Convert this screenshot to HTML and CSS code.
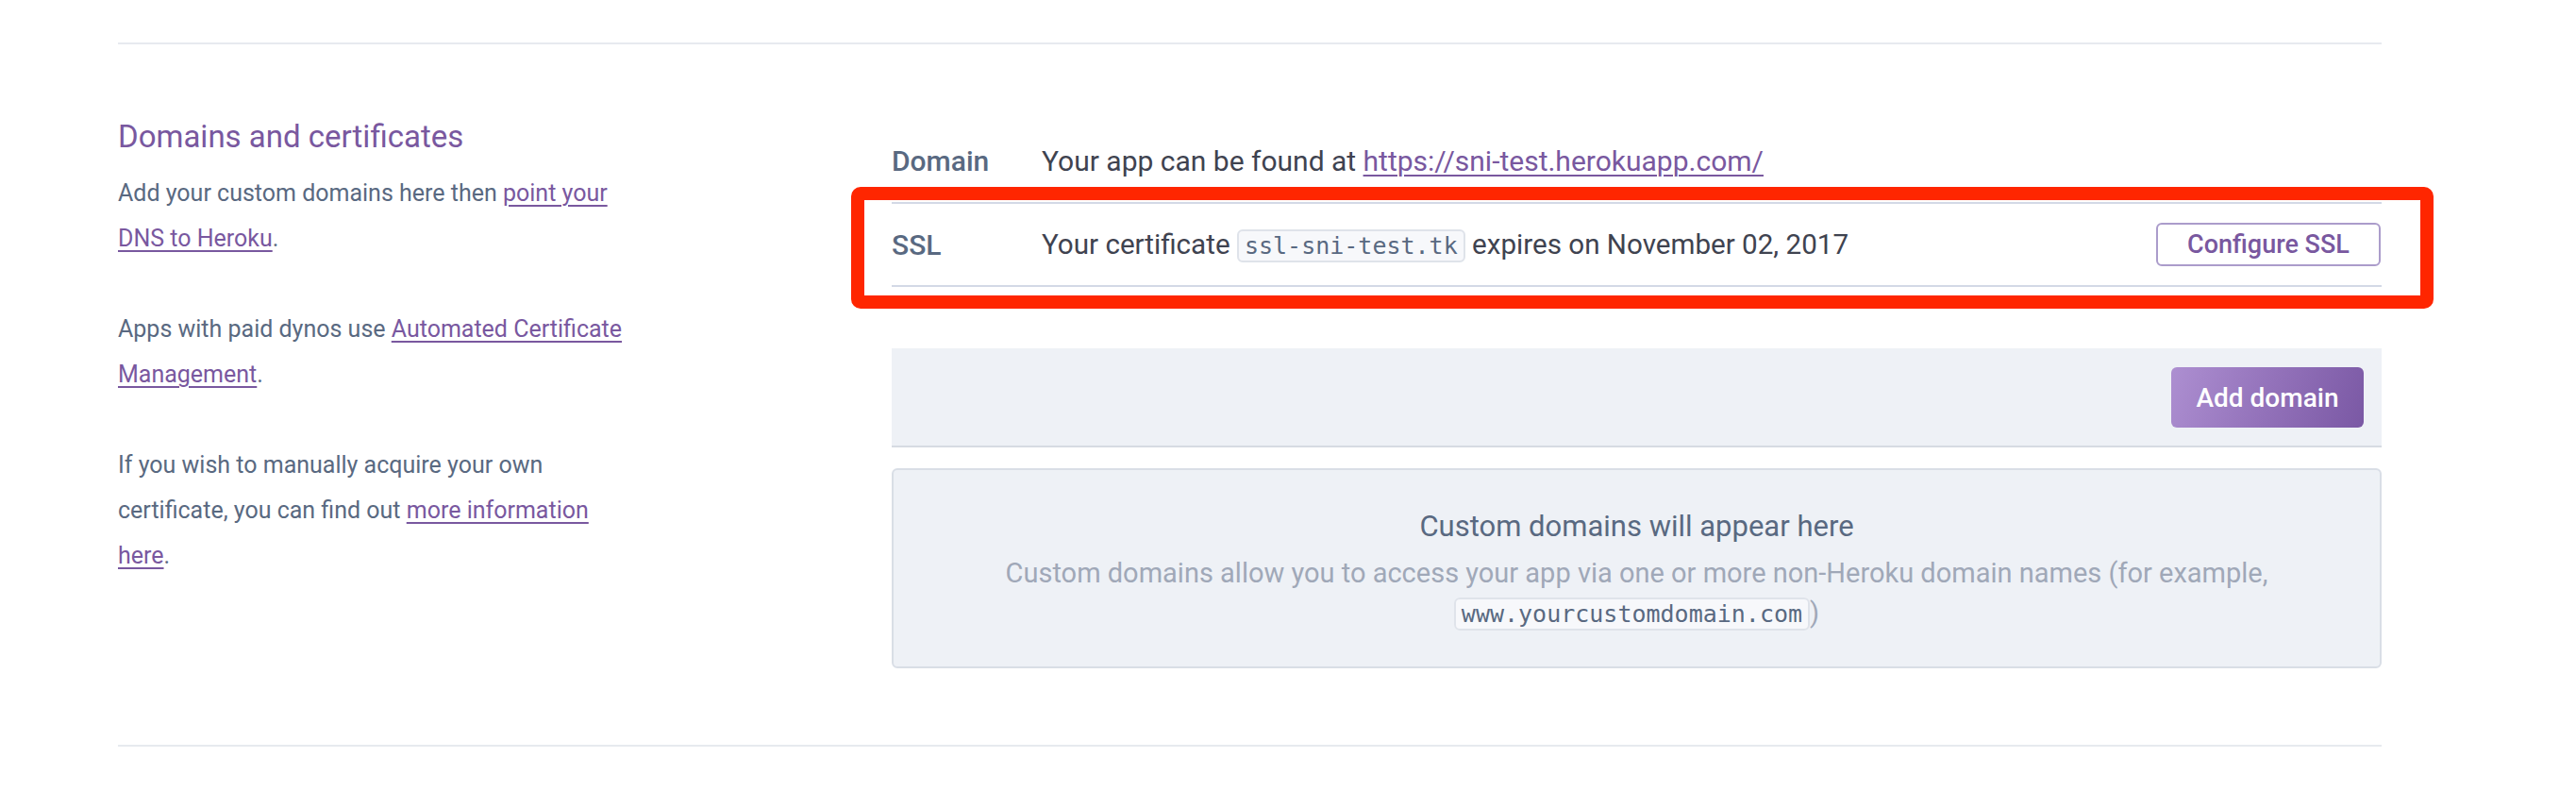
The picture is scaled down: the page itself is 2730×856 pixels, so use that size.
FILE: index.html
```html
<!DOCTYPE html>
<html lang="en">
<head>
<meta charset="utf-8">
<title>Domains and certificates</title>
<link rel="stylesheet" href="styles.css">
</head>
<body>
<section class="settings-section">
  <div class="intro">
    <h2 class="intro-title">Domains and certificates</h2>
    <p>Add your custom domains here then <a href="#">point your DNS to Heroku</a>.</p>
    <p>Apps with paid dynos use <a href="#">Automated Certificate Management</a>.</p>
    <p>If you wish to manually acquire your own certificate, you can find out <a href="#">more information here</a>.</p>
  </div>
  <div class="content">
    <div class="info-row">
      <div class="info-label">Domain</div>
      <div class="info-value">Your app can be found at <a href="#">https://sni-test.herokuapp.com/</a></div>
    </div>
    <div class="info-row ssl-row">
      <div class="info-label">SSL</div>
      <div class="info-value">Your certificate <code>ssl-sni-test.tk</code> expires on November 02, 2017</div>
      <button class="btn-outline" type="button">Configure SSL</button>
      <div class="highlight"></div>
    </div>
    <div class="toolbar">
      <button class="btn-primary" type="button">Add domain</button>
    </div>
    <div class="empty-state">
      <div class="empty-title">Custom domains will appear here</div>
      <div class="empty-text">Custom domains allow you to access your app via one or more non-Heroku domain names (for example, <code>www.yourcustomdomain.com</code>)</div>
    </div>
  </div>
</section>
</body>
</html>
```

FILE: styles.css
```css
html, body {
  margin: 0;
  padding: 0;
  background: #ffffff;
}

body {
  font-family: Roboto, "Liberation Sans", Arial, sans-serif;
  color: #596981;
}

.settings-section {
  box-sizing: border-box;
  margin: 45px 0 0 125px;
  width: 2399px;
  border-top: 2px solid #e7eaef;
  border-bottom: 2px solid #e7eaef;
  padding: 78px 0 81px;
  display: flex;
}

.intro {
  width: 820px;
  flex: none;
}

.intro-title {
  margin: 0 0 16px;
  font-size: 33px;
  line-height: 40px;
  font-weight: 400;
  color: #79589f;
}

.intro p {
  width: 552px;
  margin: 0 0 48px;
  font-size: 25px;
  line-height: 48px;
  color: #596981;
}

a {
  color: #79589f;
  text-decoration: underline;
  text-decoration-thickness: 2px;
  text-underline-offset: 4px;
}

.content {
  flex: 1;
  padding-top: 2px;
}

.info-row {
  box-sizing: border-box;
  display: flex;
  align-items: center;
  height: 87px;
  font-size: 30px;
}

.info-label {
  width: 159px;
  flex: none;
  font-weight: 500;
  color: #596981;
}

.info-value {
  flex: 1;
  color: #3f4350;
}

.ssl-row {
  position: relative;
  height: 90px;
  border-top: 2px solid #d3d9e6;
  border-bottom: 2px solid #d3d9e6;
}

.ssl-row .info-value {
  font-size: 29.6px;
}

code {
  font-family: "DejaVu Sans Mono", "Liberation Mono", monospace;
  font-size: 25px;
  color: #596981;
  background: #f7f8fb;
  border: 2px solid #dfe3ea;
  border-radius: 6px;
  padding: 1px 6px;
}

.btn-outline {
  box-sizing: border-box;
  flex: none;
  width: 238px;
  height: 46px;
  margin-right: 1px;
  padding: 0;
  border: 2px solid #ab9ccb;
  border-radius: 6px;
  background: #ffffff;
  color: #79589f;
  font-family: inherit;
  font-size: 27px;
  font-weight: 500;
}

.highlight {
  position: absolute;
  top: -18px;
  bottom: -25px;
  left: -43px;
  right: -55px;
  border: 14px solid #ff2600;
  border-radius: 10px;
  pointer-events: none;
}

.toolbar {
  margin-top: 65px;
  display: flex;
  justify-content: flex-end;
  padding: 20px 19px 19px;
  background: #eef1f6;
  border-bottom: 2px solid #d6dbe2;
}

.btn-primary {
  width: 204px;
  height: 64px;
  padding: 0;
  border: 0;
  border-radius: 6px;
  background: linear-gradient(110deg, #ad8fd1 0%, #9372ba 50%, #7a58a4 100%);
  color: #ffffff;
  font-family: inherit;
  font-size: 28px;
  font-weight: 500;
}

.empty-state {
  box-sizing: border-box;
  margin-top: 22px;
  height: 212px;
  padding: 40px 40px 0;
  border: 2px solid #d9dee6;
  border-radius: 6px;
  background: #eef1f6;
  text-align: center;
}

.empty-title {
  font-size: 31px;
  line-height: 40px;
  color: #596981;
}

.empty-text {
  margin-top: 8px;
  font-size: 29px;
  line-height: 42px;
  color: #a0a8b8;
}
```
